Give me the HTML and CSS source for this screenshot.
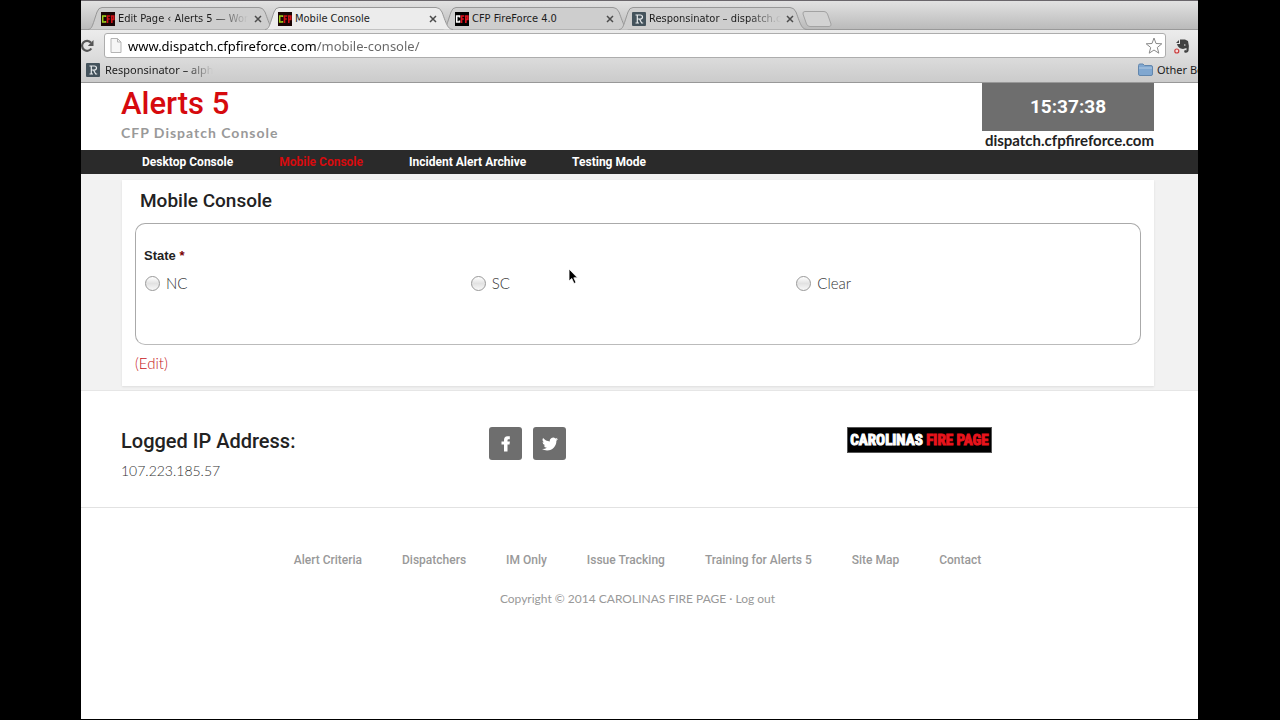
FILE: index.html
```html
<!DOCTYPE html>
<html lang="en">
<head>
<meta charset="utf-8">
<title>Mobile Console</title>
<link rel="stylesheet" href="styles.css">
</head>
<body>
<svg class="defs" width="0" height="0" aria-hidden="true">
  <symbol id="responsinator" viewBox="0 0 14 14">
    <rect width="14" height="14" rx="1" fill="#44535c"/>
    <path d="M4 3h4.200q2.300 0 2.300 2t-2.300 2H5.500M5.300 3v8M3.500 11h3.500M7.500 7l2.200 4h1.500M3.500 3h2" fill="none" stroke="#e8ecee" stroke-width="1.200"/>
  </symbol>
  <symbol id="cfp-green" viewBox="0 0 14 14">
    <rect width="14" height="14" fill="#1a0505"/>
    <path d="M4.500 5V4H1.700v6h2.800V9" fill="none" stroke="#9fd01c" stroke-width="1.500"/>
    <path d="M6.500 11V4h2.800M6.500 7h2.300M10.800 11V4h2v3.500h-2" fill="none" stroke="#d01217" stroke-width="1.600"/>
  </symbol>
  <symbol id="cfp-white" viewBox="0 0 14 14">
    <rect width="14" height="14" fill="#000"/>
    <path d="M4.500 5.500V4H1.700v6h2.800V8.500" fill="none" stroke="#fff" stroke-width="1.600"/>
    <path d="M6.500 11V4h2.800M6.500 7h2.300M10.800 11V4h2v3.500h-2" fill="none" stroke="#e0121f" stroke-width="1.700"/>
  </symbol>
  <symbol id="tab-shape" viewBox="0 0 188 23" preserveAspectRatio="none">
    <path d="M0 22.500C4 22 4 20 9 5Q10.500 .500 14 .500H171Q175 .500 177 5C182 19 183 22 188 22.500" />
  </symbol>
  <symbol id="cross" viewBox="0 0 8 8">
    <path d="M1 1l6 6M7 1L1 7" stroke="#4c4c4c" stroke-width="1.500"/>
  </symbol>
</svg>

<div class="browser">
  <div class="tabs">
    <div class="tab">
      <svg class="shape"><use href="#tab-shape"/></svg>
      <svg class="favicon"><use href="#cfp-green"/></svg>
      <span class="tab-title fade">Edit Page ‹ Alerts 5 — Wor</span>
      <button class="close" aria-label="Close tab"><svg><use href="#cross"/></svg></button>
    </div>
    <div class="tab active">
      <svg class="shape"><use href="#tab-shape"/></svg>
      <svg class="favicon"><use href="#cfp-green"/></svg>
      <span class="tab-title">Mobile Console</span>
      <button class="close" aria-label="Close tab"><svg><use href="#cross"/></svg></button>
    </div>
    <div class="tab">
      <svg class="shape"><use href="#tab-shape"/></svg>
      <svg class="favicon"><use href="#cfp-white"/></svg>
      <span class="tab-title">CFP FireForce 4.0</span>
      <button class="close" aria-label="Close tab"><svg><use href="#cross"/></svg></button>
    </div>
    <div class="tab">
      <svg class="shape"><use href="#tab-shape"/></svg>
      <svg class="favicon"><use href="#responsinator"/></svg>
      <span class="tab-title fade">Responsinator – dispatch.c</span>
      <button class="close" aria-label="Close tab"><svg><use href="#cross"/></svg></button>
    </div>
    <button class="new-tab" aria-label="New tab">
      <svg width="30" height="16" viewBox="0 0 30 16"><path d="M3 .500h19q2.500 0 3.500 2.500l3.500 10q.500 2.500-2 2.500H8q-2.500 0-3.500-2.500L1 3Q.500.500 3 .500z" fill="#d2d2d2" stroke="#a2a2a2"/></svg>
    </button>
  </div>

  <div class="toolbar">
    <button class="reload" aria-label="Reload">
      <svg width="14" height="14" viewBox="0 0 14 14"><path d="M10.300 9.500A5 5 0 1 1 10 3.700" fill="none" stroke="#555" stroke-width="2.200"/><path d="M12.500 1v6H6.800z" fill="#555"/></svg>
    </button>
    <div class="omnibox">
      <svg width="12" height="15" viewBox="0 0 12 15"><path d="M1 .500h6.500L11 4v10.500H1z" fill="#f6f6f6" stroke="#b4b4b4"/><path d="M7.500.500V4H11" fill="none" stroke="#b4b4b4"/></svg>
      <input class="url" type="text" aria-label="Address" value="www.dispatch.cfpfireforce.com/mobile-console/">
      <button class="star" aria-label="Bookmark this page">
        <svg width="18" height="17" viewBox="0 0 18 17"><path d="M9 1l2 5.500 5.800.300-4.500 3.700 1.500 5.700L9 13l-4.800 3.200 1.500-5.700L1.200 6.800 7 6.500z" fill="#fff" stroke="#888" stroke-linejoin="round"/></svg>
      </button>
    </div>
    <button class="clipper" aria-label="Web Clipper">
      <svg width="16" height="16" viewBox="0 0 16 16"><path d="M6 1.500h5l3 1.500q1.500 5 .500 10-1 2.500-4 1.500-1-2 .500-2.500l1.500.500V10L9 11Q4 10.500 3 6h3z" fill="#414141"/><path d="M5 2v3H2z" fill="#414141"/><circle cx="10.800" cy="7" r=".800" fill="#ddd"/><circle cx="2.800" cy="13" r="2" fill="#f5dddd" stroke="#cb3d3d" stroke-width="1.200"/></svg>
    </button>
  </div>

  <div class="bookmarks">
    <a class="bookmark" href="#"><svg class="favicon"><use href="#responsinator"/></svg><span class="fade short">Responsinator – alph</span></a>
    <a class="bookmark others" href="#">
      <svg width="15" height="13" viewBox="0 0 15 13"><path d="M.500 2.500q0-1.500 1.500-1.500h3l1.500 1.500H13q1.500 0 1.500 1.500v7q0 1.500-1.500 1.500H2Q.500 12.500.500 11z" fill="#80a7d0" stroke="#6287ae"/><path d="M1 5h13" stroke="#b2cbe4"/></svg>
      <span>Other Bo</span>
    </a>
  </div>

  <div class="page">
    <header class="masthead">
      <div>
        <h1>Alerts 5</h1>
        <p class="tagline">CFP Dispatch Console</p>
      </div>
      <div class="status">
        <time class="clock">15:37:38</time>
        <span class="host">dispatch.cfpfireforce.com</span>
      </div>
    </header>

    <nav class="main-nav">
      <a href="#">Desktop Console</a>
      <a href="#" class="current">Mobile Console</a>
      <a href="#">Incident Alert Archive</a>
      <a href="#">Testing Mode</a>
    </nav>

    <main class="content">
      <article class="card">
        <h2>Mobile Console</h2>
        <form class="console-form">
          <fieldset>
            <legend>State <span class="required">*</span></legend>
            <div class="choices">
              <label><input type="radio" name="state">NC</label>
              <label><input type="radio" name="state">SC</label>
              <label><input type="radio" name="state">Clear</label>
            </div>
          </fieldset>
        </form>
        <a class="edit" href="#">(Edit)</a>
      </article>
    </main>

    <section class="widgets">
      <div>
        <h3>Logged IP Address:</h3>
        <p class="ip">107.223.185.57</p>
      </div>
      <div class="social">
        <a href="#" aria-label="Facebook"><svg width="18" height="18" viewBox="0 0 18 18"><path d="M7 16.500V9.500H4.500V6.500H7V5Q7 1.200 10.500 1.200h2.300v3h-1.300q-1 0-1 1v1.300h2.400l-.400 3h-2v7z" fill="#fff"/></svg></a>
        <a href="#" aria-label="Twitter"><svg width="16" height="16" viewBox="0 0 24 24"><path d="M23.950 4.570a10 10 0 0 1-2.820.770 4.960 4.960 0 0 0 2.160-2.720c-.950.550-2 .950-3.130 1.180a4.920 4.920 0 0 0-8.380 4.480C7.690 8.090 4.070 6.130 1.640 3.160a4.900 4.900 0 0 0 1.520 6.570 4.900 4.900 0 0 1-2.230-.610v.060a4.920 4.920 0 0 0 3.950 4.830 5 5 0 0 1-2.210.080 4.940 4.940 0 0 0 4.600 3.420A9.870 9.870 0 0 1 0 19.540a14 14 0 0 0 7.550 2.210c9.050 0 14-7.500 14-13.990 0-.210 0-.420-.020-.630a9.900 9.900 0 0 0 2.420-2.560z" fill="#fff"/></svg></a>
      </div>
      <div>
        <a class="logo" href="#">CAROLINAS <span>FIRE PAGE</span></a>
      </div>
    </section>

    <footer class="footer">
      <nav class="footer-nav">
        <a href="#">Alert Criteria</a>
        <a href="#">Dispatchers</a>
        <a href="#">IM Only</a>
        <a href="#">Issue Tracking</a>
        <a href="#">Training for Alerts 5</a>
        <a href="#">Site Map</a>
        <a href="#">Contact</a>
      </nav>
      <p class="copyright">Copyright © 2014 CAROLINAS FIRE PAGE · <a href="#">Log out</a></p>
    </footer>
  </div>
</div>

<svg class="pointer" width="12" height="18" viewBox="0 0 12 18" aria-hidden="true"><path d="M1 1v12l2.800-2.500L6 15.500l2-1-2.200-4.700H9.500z" fill="#000" stroke="#fff" stroke-width=".800"/></svg>
</body>
</html>
```

FILE: styles.css
```css
* {
  box-sizing: border-box;
}

body {
  margin: 0;
  min-height: 100vh;
  padding: 0 82px 1px 81px;
  display: flex;
  background: #000;
  font-family: Lato, sans-serif;
}

h1, h2, h3, p {
  margin: 0;
}

h1, h2, h3, .clock, .main-nav, .footer-nav {
  font-family: Roboto, sans-serif;
}

a {
  color: inherit;
  text-decoration: none;
}

button {
  padding: 0;
  border: 0;
  background: none;
  display: flex;
  align-items: center;
  justify-content: center;
}

svg {
  flex: none;
}

.defs {
  position: absolute;
}

.browser {
  flex: 1;
  min-width: 0;
  display: flex;
  flex-direction: column;
  overflow: hidden;
  background: #fff;
}

/* Tab strip */
.tabs {
  height: 30px;
  padding: 6px 0 0 7px;
  display: flex;
  border-top: 1px solid #6a666b;
  background: linear-gradient(#e2e2e2, #b9b9b9);
  box-shadow: inset 0 -1px #999;
  font: 11px "DejaVu Sans Condensed", "DejaVu Sans", sans-serif;
}

.tab {
  position: relative;
  width: 188px;
  height: 23px;
  margin-right: -11px;
  padding: 0 12px 0 13px;
  display: flex;
  align-items: center;
  gap: 3px;
  color: #1c1c1c;
}

.tab.active {
  z-index: 1;
}

.shape {
  position: absolute;
  inset: 0;
  width: 100%;
  height: 100%;
  fill: #cecece;
  stroke: #979797;
}

.active .shape {
  fill: #ececec;
}

.favicon {
  position: relative;
  width: 14px;
  height: 14px;
}

.tab-title {
  position: relative;
  flex: 1;
  white-space: nowrap;
}

.fade {
  white-space: nowrap;
  mask-image: linear-gradient(90deg, #000 75%, transparent);
}

.close {
  position: relative;
  width: 16px;
  height: 16px;
}

.close svg {
  width: 8px;
  height: 8px;
}

.new-tab {
  margin-left: 6px;
  height: 24px;
}

/* Toolbar */
.toolbar {
  height: 30px;
  padding: 3px 8px 2px 0;
  display: flex;
  align-items: center;
  background: linear-gradient(#ececec, #dadada);
}

.reload {
  margin-right: 9px;
}

.omnibox {
  flex: 1;
  height: 25px;
  padding: 0 2px 0 5px;
  display: flex;
  align-items: center;
  gap: 6px;
  border: 1px solid #adadad;
  border-radius: 3px;
  background: #fff;
}

.url {
  flex: 1;
  min-width: 0;
  padding: 0;
  border: 0;
  outline: 0;
  font: 13px "Noto Sans", sans-serif;
  color: transparent;
  background: linear-gradient(90deg, #000 189px, #666 189px);
  background-clip: text;
}

.clipper {
  margin-left: 8px;
}

.bookmarks {
  height: 23px;
  padding: 0 0 3px 5px;
  display: flex;
  align-items: center;
  justify-content: space-between;
  border-bottom: 1px solid #989898;
  background: linear-gradient(#dadada, #cbcbcb);
  font: 11px "Noto Sans", sans-serif;
  color: #1c1c1c;
}

.bookmark {
  display: flex;
  align-items: center;
  gap: 5px;
}

.short {
  width: 108px;
}

.others {
  width: 60px;
  gap: 4px;
  white-space: nowrap;
}

/* Site header */
.masthead {
  height: 67px;
  padding: 0 44px 0 40px;
  display: flex;
  justify-content: space-between;
}

h1 {
  font-size: 31px;
  font-weight: 500;
  line-height: 42px;
  color: #d60a0e;
}

.tagline {
  font-size: 14px;
  font-weight: 700;
  line-height: 16px;
  letter-spacing: 1px;
  color: #999;
}

.status {
  display: flex;
  flex-direction: column;
  align-items: flex-end;
}

.clock {
  width: 172px;
  font-size: 19px;
  font-weight: 700;
  line-height: 48px;
  text-align: center;
  color: #fff;
  background: #6e6e6e;
}

.host {
  font-size: 15px;
  font-weight: 700;
  line-height: 19px;
  color: #222;
}

.main-nav {
  padding: 0 61px;
  display: flex;
  gap: 46px;
  font-size: 12px;
  font-weight: 700;
  line-height: 24px;
  color: #fff;
  background: #2a2a2a;
}

.current {
  color: #d60a0e;
}

/* Console card */
.content {
  padding: 6px 44px 4px 41px;
  border-bottom: 1px solid #e6e6e6;
  background: #f2f2f2;
}

.card {
  padding: 7px 13px 12px;
  background: #fff;
  box-shadow: 0 1px 2px #ddd;
}

h2 {
  padding-left: 5px;
  font-size: 19px;
  font-weight: 500;
  line-height: 28px;
  color: #222;
}

.console-form {
  margin: 8px 0;
  padding: 24px 19px 51px 8px;
  border: 1px solid #aaa;
  border-bottom-color: #bbb;
  border-radius: 10px;
}

fieldset {
  margin: 0;
  padding: 0;
  border: 0;
}

legend {
  padding: 0;
  font: bold 13px/16px "Liberation Sans", sans-serif;
  color: #222;
}

.required {
  color: #790000;
}

.choices {
  padding-top: 9px;
  display: grid;
  grid-template-columns: repeat(3, 1fr);
  font-size: 15px;
  font-weight: 300;
  line-height: 20px;
  color: #333;
}

.choices label {
  display: flex;
  align-items: center;
  gap: 6px;
}

.choices input {
  appearance: none;
  width: 15px;
  height: 15px;
  margin: 0 0 0 1px;
  border: 1px solid #999;
  border-radius: 50%;
  background: linear-gradient(#fff, #e2e2e2 50%, #f8f8f8);
}

.edit {
  display: block;
  font-size: 15px;
  font-weight: 300;
  line-height: 21px;
  color: #c5141a;
}

/* Footer widgets */
.widgets {
  min-height: 117px;
  padding: 36px 44px 24px 40px;
  display: grid;
  grid-template-columns: 368fr 358fr 307fr;
  border-bottom: 1px solid #e2e2e2;
}

h3 {
  font-size: 20px;
  font-weight: 500;
  line-height: 28px;
  color: #222;
}

.ip {
  padding-top: 6px;
  font-size: 14px;
  font-weight: 300;
  line-height: 20px;
  color: #333;
}

.social {
  display: flex;
  gap: 11px;
}

.social a {
  width: 33px;
  height: 33px;
  display: flex;
  align-items: center;
  justify-content: center;
  border-radius: 3px;
  background: #6e6e6e;
}

.logo {
  display: block;
  width: 145px;
  border: 1px solid #555;
  background: #000;
  font: bold 15px/24px "Liberation Sans Narrow", "Roboto Condensed", sans-serif;
  text-align: center;
  white-space: nowrap;
  color: #fff;
  -webkit-text-stroke: 1px;
}

.logo span {
  color: #e8141c;
}

.footer {
  padding: 42px 44px 40px 40px;
  text-align: center;
  color: #999;
}

.footer-nav {
  display: flex;
  justify-content: center;
  gap: 40px;
  font-size: 12px;
  font-weight: 500;
  line-height: 20px;
}

.copyright {
  padding-top: 20px;
  font-size: 12px;
  line-height: 18px;
}

.pointer {
  position: absolute;
  left: 568px;
  top: 268px;
}
```
